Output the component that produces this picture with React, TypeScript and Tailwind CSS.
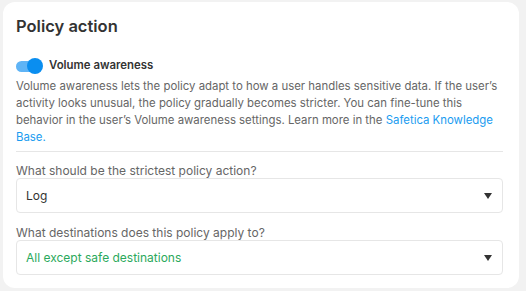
export default function App() {
  return (
    <div className="w-[526px] h-[291px] bg-[#f2f2f2] pt-[2px] pl-[3px] font-['Inter',sans-serif]">
      <div className="w-[516px] h-[286px] bg-white rounded-[12px] px-[13px] pt-[11px]">
        <h1 className="text-[16.5px] font-semibold text-[#333] leading-[26px]">Policy action</h1>

        <div className="flex items-center mt-[19px] h-[16px]">
          <div className="relative w-[27px] h-[16px] flex items-center">
            <div className="w-[22px] h-[11px] rounded-full bg-[#5fb4f6]" />
            <div className="absolute right-0 top-0 w-[16px] h-[16px] rounded-full bg-[#0a8ef0]" />
          </div>
          <span className="ml-[6px] text-[11.4px] font-semibold text-[#333]">Volume awareness</span>
        </div>

        <p className="mt-[4px] text-[11.4px] leading-[17px] text-[#666] pr-[8px]">
          Volume awareness lets the policy adapt to how a user handles sensitive data. If the user’s activity looks unusual, the policy gradually becomes stricter. You can fine-tune this behavior in the user’s Volume awareness settings. Learn more in the{" "}
          <span className="text-[#1a9cf0]">Safetica Knowledge Base.</span>
        </p>

        <div className="mt-[5px] h-px bg-[#e6e6e6] mr-[3px]" />

        <div className="mt-[12px] text-[12px] leading-[14px] text-[#666]">What should be the strictest policy action?</div>
        <div className="h-[35px] mr-[3px] border border-[#e6e6e6] rounded-[4px] flex items-center justify-between pl-[9px] pr-[10px]">
          <span className="text-[12px] text-[#333]">Log</span>
          <svg width="8" height="6" viewBox="0 0 8 6"><path d="M0 0h8L4 6z" fill="#333" /></svg>
        </div>

        <div className="mt-[13px] text-[12px] leading-[14px] text-[#666]">What destinations does this policy apply to?</div>
        <div className="h-[35px] mr-[3px] border border-[#e6e6e6] rounded-[4px] flex items-center justify-between pl-[9px] pr-[10px]">
          <span className="text-[12px] text-[#2ba95c]">All except safe destinations</span>
          <svg width="8" height="6" viewBox="0 0 8 6"><path d="M0 0h8L4 6z" fill="#333" /></svg>
        </div>
      </div>
    </div>
  )
}
